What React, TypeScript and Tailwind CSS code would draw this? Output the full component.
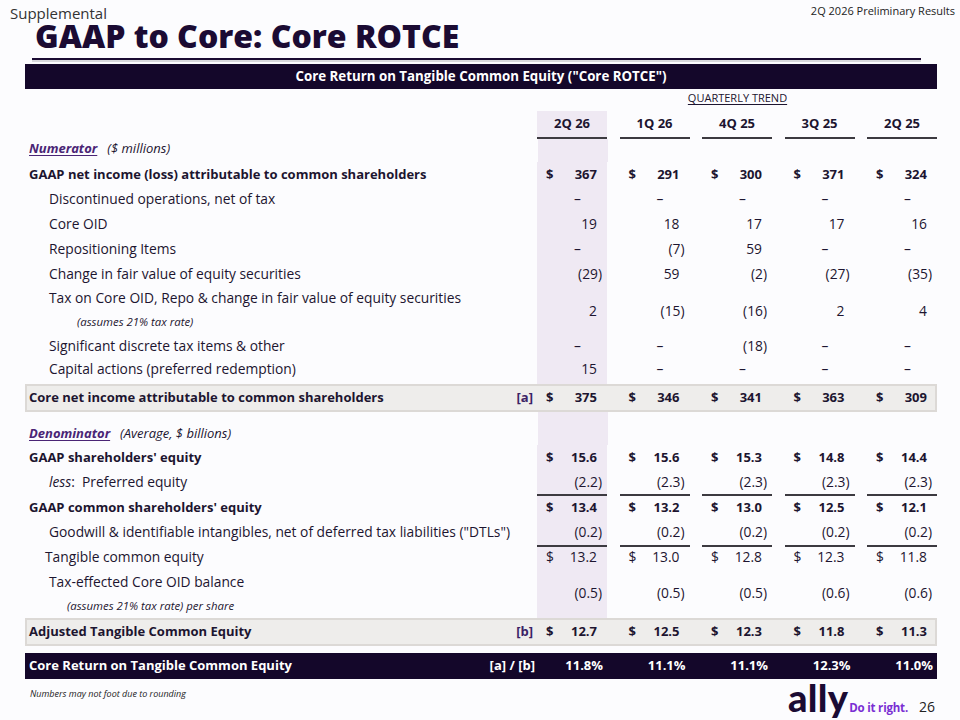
import React from 'react';

const shade = 'bg-[#efe9f3]';

type RowDef = {
  label: React.ReactNode;
  vals: string[];
  h: number;
  bold?: boolean;
  dollar?: boolean;
  indent?: string;
  pad?: string;
};

// accounting style number: parentheses hang to the right, dashes sit left
function Num({ v }: { v: string }) {
  if (v === '–') return <span className="pr-[16px]">–</span>;
  if (v.startsWith('(')) {
    return (
      <span>
        {v.slice(0, -1)}
        <span className="-mr-[5px]">)</span>
      </span>
    );
  }
  return <span>{v}</span>;
}

function Cells({ vals, dollar, shaded, pad = '' }: { vals: string[]; dollar?: boolean; shaded: boolean; pad?: string }) {
  return (
    <div className="flex gap-[12.5px] h-full">
      {vals.map((v, i) => (
        <div
          key={i}
          className={`w-[70px] h-full flex items-center justify-between pl-[9px] pr-[10px] ${pad} ${i === 0 && shaded ? shade : ''}`}
        >
          <span>{dollar ? '$' : ''}</span>
          <Num v={v} />
        </div>
      ))}
    </div>
  );
}

function Row({ label, vals, h, bold, dollar, indent = 'pl-[4px]', pad = '' }: RowDef) {
  return (
    <div className={`flex ${bold ? 'font-bold text-[13px]' : 'text-[13.8px]'}`} style={{ height: h }}>
      <div className={`w-[513px] flex items-center ${indent} ${pad}`}>{label}</div>
      <Cells vals={vals} dollar={dollar} shaded pad={pad} />
    </div>
  );
}

function Rule() {
  return (
    <div className="flex h-[2px]">
      <div className="w-[513px]" />
      <div className="flex gap-[12.5px]">
        {[0, 1, 2, 3, 4].map((i) => (
          <div key={i} className="w-[70px] h-[2px] bg-[#3c3a40]" />
        ))}
      </div>
    </div>
  );
}

function SummaryRow({ label, tag, vals }: { label: string; tag: string; vals: string[] }) {
  return (
    <div className="flex h-[28px] bg-[#eeedeb] shadow-[inset_0_0_0_2px_#dcd9d6] font-bold text-[13px]">
      <div className="w-[513px] flex items-center justify-between pl-[4px] pr-[4px]">
        <span>{label}</span>
        <span className="text-[#3b2366]">{tag}</span>
      </div>
      <Cells vals={vals} dollar shaded={false} />
    </div>
  );
}

function TwoLine({ main, sub, mainPad, subIndent }: { main: string; sub: string; mainPad: string; subIndent: string }) {
  return (
    <div className={`flex flex-col self-start ${mainPad}`}>
      <span className="leading-[18px]">{main}</span>
      <span className={`${subIndent} mt-[8px] text-[11.4px] leading-[14px] italic`}>{sub}</span>
    </div>
  );
}

function Section({ name, note, pad }: { name: string; note: string; pad: string }) {
  return (
    <div className={`flex h-full ${pad}`}>
      <div className="w-[513px] pl-[4px] leading-[18px]">
        <span className="font-bold italic underline underline-offset-2 text-[13px] text-[#4a2575]">{name}</span>
        <span className="italic text-[13px] ml-[10px]">{note}</span>
      </div>
    </div>
  );
}

export default function App() {
  return (
    <div className="w-[960px] h-[720px] bg-[#fcfcfe] text-[#1d1530] font-['Open_Sans',sans-serif] flex flex-col overflow-hidden">
      {/* top strip */}
      <div className="h-[22px] flex justify-between items-start">
        <span className="pl-[10px] pt-[4px] text-[15px] leading-[18px] text-[#333]">Supplemental</span>
        <span className="pr-[5px] pt-[4px] text-[11px] leading-[14px] text-[#222]">2Q 2026 Preliminary Results</span>
      </div>
      <h1 className="pl-[35px] h-[28px] text-[32px] leading-[28px] font-extrabold text-[#1b0b33]">
        GAAP to Core: Core ROTCE
      </h1>
      <div className="mt-[8px] ml-[32px] w-[889px] h-[2px] bg-[#1b0b33]" />
      <div className="ml-[32px] w-[889px] h-[2px] bg-[#d9d9dd]" />

      <div className="ml-[25px] w-[912px] mt-[2px] text-[13.8px]">
        <div className="h-[25px] bg-[#14072a] text-white font-bold text-[13.3px] flex items-center justify-center">
          Core Return on Tangible Common Equity ("Core ROTCE")
        </div>

        <div className="h-[22px] flex">
          <div className="w-[513px]" />
          <div className="flex-1 flex justify-center pt-[2px]">
            <span className="text-[11px] leading-[14px] underline underline-offset-2">QUARTERLY TREND</span>
          </div>
        </div>

        <div className="h-[28px] flex font-bold text-[13px]">
          <div className="w-[513px]" />
          <div className="flex gap-[12.5px]">
            {['2Q 26', '1Q 26', '4Q 25', '3Q 25', '2Q 25'].map((q, i) => (
              <div
                key={q}
                className={`w-[70px] h-[28px] flex items-center justify-center border-b-2 border-[#3c3a40] ${i === 0 ? shade : ''}`}
              >
                {q}
              </div>
            ))}
          </div>
        </div>

        <div className="relative h-[23px] flex">
          <Section name="Numerator" note="($ millions)" pad="pt-0" />
          <div className="absolute left-[513px] top-0 w-[70px] h-full bg-[#efe9f3]" />
        </div>
        <Row h={25} bold dollar label="GAAP net income (loss) attributable to common shareholders" vals={['367', '291', '300', '371', '324']} />
        <Row h={25} indent="pl-[24px]" label="Discontinued operations, net of tax" vals={['–', '–', '–', '–', '–']} />
        <Row h={25} indent="pl-[24px]" label="Core OID" vals={['19', '18', '17', '17', '16']} />
        <Row h={25} indent="pl-[24px]" label="Repositioning Items" vals={['–', '(7)', '59', '–', '–']} />
        <Row h={25} indent="pl-[24px]" label="Change in fair value of equity securities" vals={['(29)', '59', '(2)', '(27)', '(35)']} />
        <Row
          h={48}
          indent="pl-[24px]"
          label={<TwoLine main="Tax on Core OID, Repo & change in fair value of equity securities" sub="(assumes 21% tax rate)" mainPad="pt-[2px]" subIndent="pl-[28px]" />}
          vals={['2', '(15)', '(16)', '2', '4']}
        />
        <Row h={23} indent="pl-[24px]" label="Significant discrete tax items & other" vals={['–', '–', '(18)', '–', '–']} />
        <Row h={26} indent="pl-[24px]" pad="pb-[4px]" label="Capital actions (preferred redemption)" vals={['15', '–', '–', '–', '–']} />
        <SummaryRow label="Core net income attributable to common shareholders" tag="[a]" vals={['375', '346', '341', '363', '309']} />

        <div className="relative h-[33px] flex">
          <Section name="Denominator" note="(Average, $ billions)" pad="pt-[12px]" />
          <div className="absolute left-[513px] top-0 w-[70px] h-full bg-[#efe9f3]" />
        </div>
        <Row h={25} bold dollar label="GAAP shareholders' equity" vals={['15.6', '15.6', '15.3', '14.8', '14.4']} />
        <Row
          h={24}
          indent="pl-[24px]"
          label={
            <span>
              <span className="italic">less</span>:&nbsp; Preferred equity
            </span>
          }
          vals={['(2.2)', '(2.3)', '(2.3)', '(2.3)', '(2.3)']}
        />
        <Rule />
        <Row h={23} bold dollar label="GAAP common shareholders' equity" vals={['13.4', '13.2', '13.0', '12.5', '12.1']} />
        <Row h={26} indent="pl-[24px]" label={'Goodwill & identifiable intangibles, net of deferred tax liabilities ("DTLs")'} vals={['(0.2)', '(0.2)', '(0.2)', '(0.2)', '(0.2)']} />
        <Rule />
        <Row h={21} dollar indent="pl-[20px]" label="Tangible common equity" vals={['13.2', '13.0', '12.8', '12.3', '11.8']} />
        <Row
          h={50}
          indent="pl-[24px]"
          label={<TwoLine main="Tax-effected Core OID balance" sub="(assumes 21% tax rate) per share" mainPad="pt-[5px]" subIndent="pl-[18px]" />}
          vals={['(0.5)', '(0.5)', '(0.5)', '(0.6)', '(0.6)']}
        />
        <SummaryRow label="Adjusted Tangible Common Equity" tag="[b]" vals={['12.7', '12.5', '12.3', '11.8', '11.3']} />

        <div className="h-[7px]" />
        <div className="h-[26px] flex bg-[#14072a] text-white font-bold text-[13px]">
          <div className="w-[513px] flex items-center justify-between pl-[4px] pr-[2px]">
            <span>Core Return on Tangible Common Equity</span>
            <span>[a] / [b]</span>
          </div>
          <div className="flex gap-[12.5px]">
            {['11.8%', '11.1%', '11.1%', '12.3%', '11.0%'].map((p, i) => (
              <div key={i} className="w-[70px] flex items-center justify-end pr-[4px]">
                {p}
              </div>
            ))}
          </div>
        </div>
      </div>

      {/* footer */}
      <div className="flex justify-between items-start">
        <span className="pl-[30px] pt-[8px] text-[9px] italic text-[#222]">Numbers may not foot due to rounding</span>
        <div className="flex items-baseline pr-[25px] pt-[1px]">
          <span className="font-['Lato',sans-serif] font-black text-[38px] leading-[34px] tracking-[0.3px] text-[#1b0b33]">
            ally
          </span>
          <span className="ml-[1px] text-[11.5px] font-bold text-[#7a2fd3] tracking-[-0.2px]">Do it right.</span>
          <span className="ml-[11px] text-[14px] text-[#222]">26</span>
        </div>
      </div>
    </div>
  );
}
